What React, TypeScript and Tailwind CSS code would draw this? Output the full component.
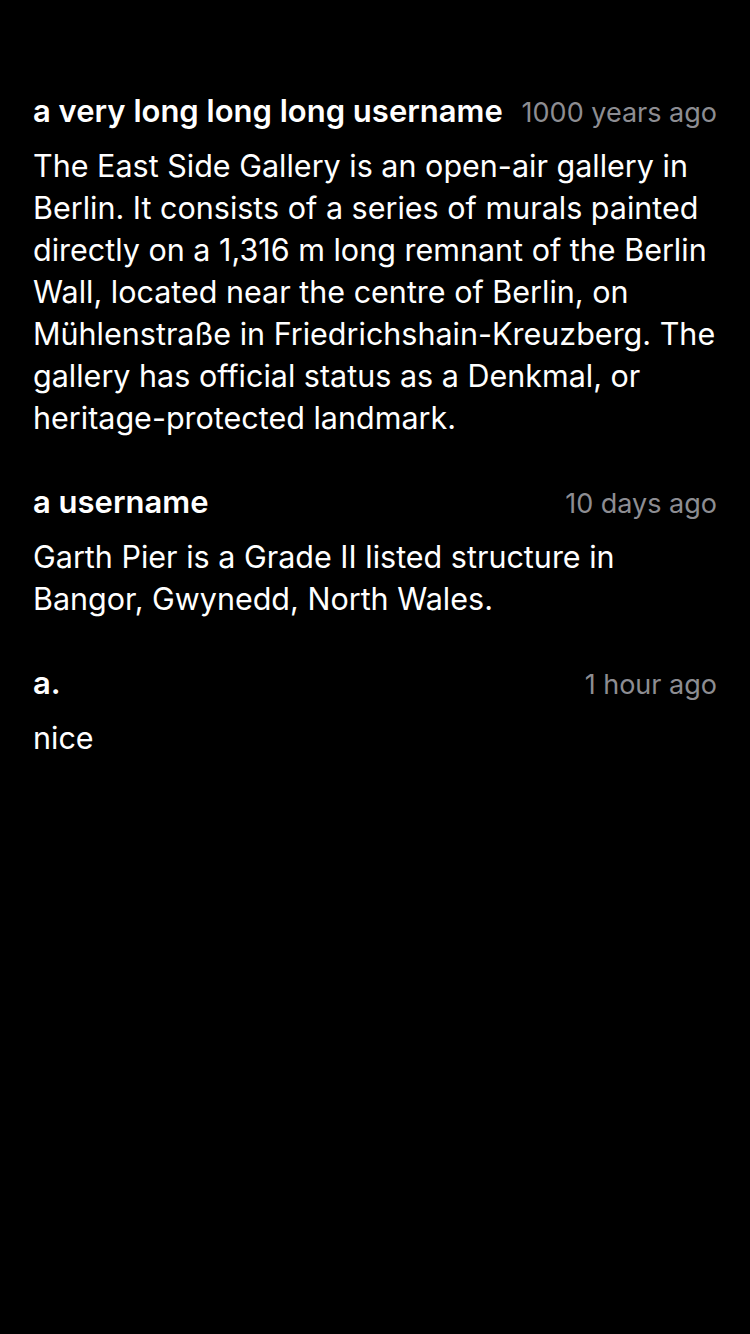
const comments = [
  {
    user: "a very long long long username",
    time: "1000 years ago",
    text: "The East Side Gallery is an open-air gallery in Berlin. It consists of a series of murals painted directly on a 1,316 m long remnant of the Berlin Wall, located near the centre of Berlin, on Mühlenstraße in Friedrichshain-Kreuzberg. The gallery has official status as a Denkmal, or heritage-protected landmark.",
  },
  {
    user: "a username",
    time: "10 days ago",
    text: "Garth Pier is a Grade II listed structure in Bangor, Gwynedd, North Wales.",
  },
  { user: "a.", time: "1 hour ago", text: "nice" },
]

export default function App() {
  return (
    <div className="min-h-[1334px] w-[750px] bg-black px-[33px] pt-[90px] font-['Inter',sans-serif] text-white">
      <div className="flex flex-col gap-[42px]">
        {comments.map((c) => (
          <div key={c.user} className="flex flex-col gap-[13px]">
            <div className="flex items-center justify-between gap-4">
              <span className="truncate text-[31px] leading-[42px] font-semibold">{c.user}</span>
              <span className="shrink-0 self-end text-[27px] leading-[38px] text-[#8d8d92]">{c.time}</span>
            </div>
            <p className="text-[30.5px] leading-[42px]">{c.text}</p>
          </div>
        ))}
      </div>
    </div>
  )
}
